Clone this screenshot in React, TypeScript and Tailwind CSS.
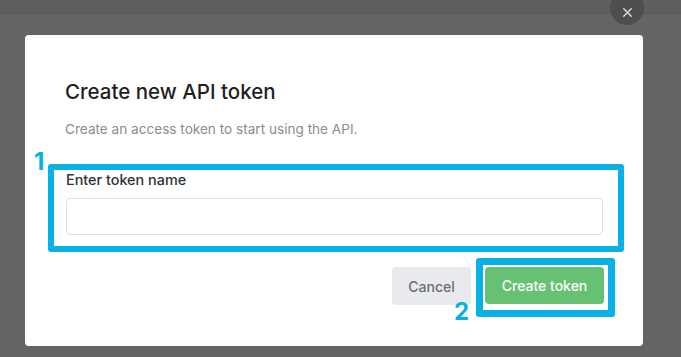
import { X } from "lucide-react";

const App = () => {
  return (
    <div
      className="relative w-[681px] h-[357px] overflow-hidden bg-[#646464]"
      style={{ fontFamily: "Inter, 'Liberation Sans', sans-serif" }}
    >
      {/* page behind the backdrop */}
      <div className="h-[14px] bg-[#5e5e5e] border-b border-[#5a5a5a]" />

      {/* close button */}
      <button className="absolute left-[610px] top-[-9px] w-[34px] h-[34px] rounded-full bg-[#4e4e4e] flex items-center justify-center text-[#e6e6e6]">
        <X className="w-[15px] h-[15px] mt-[9px]" strokeWidth={2} />
      </button>

      {/* modal */}
      <div className="ml-[25px] mt-[21px] w-[618px] h-[311px] bg-white rounded-[4px] flex flex-col">
        <div className="pl-[40px] pt-[44px]">
          <h2 className="text-[20.5px] leading-[26px] font-medium text-[#1f1f1f]">
            Create new API token
          </h2>
          <p className="mt-[15px] text-[13.6px] leading-[18px] text-[#8c8c8c]">
            Create an access token to start using the API.
          </p>
        </div>

        <div className="relative ml-[23px] mt-[26px] w-[576px] h-[88px] border-[6px] border-[#08b0e8] rounded-[3px] pl-[12px] pr-[15px] pt-[2px]">
          <span className="absolute left-[-20px] top-[-20px] text-[24px] leading-[24px] font-bold text-[#08b0e8]">
            1
          </span>
          <label className="block text-[14.4px] leading-[16px] font-medium text-[#333]">
            Enter token name
          </label>
          <input
            className="mt-[10px] w-[537px] h-[37px] rounded-[4px] border border-[#e0e0e0] outline-none"
            type="text"
          />
        </div>

        <div className="flex justify-end items-start pr-[28px] mt-[6px]">
          <button className="mt-[9px] w-[79px] h-[38px] rounded-[4px] bg-[#e9eaed] text-[14px] font-medium text-[#6b6e74]">
            Cancel
          </button>
          <div className="relative ml-[5px] border-[7px] border-[#08b0e8] rounded-[3px] bg-white pt-[2px] pl-[2px] pr-[4px] pb-[6px]">
            <span className="absolute left-[-29px] top-[35px] text-[24px] leading-[24px] font-bold text-[#08b0e8]">
              2
            </span>
            <button className="w-[119px] h-[37px] rounded-[4px] bg-[#66c172] text-[14px] font-medium text-white">
              Create token
            </button>
          </div>
        </div>
      </div>
    </div>
  );
};

export default App;
